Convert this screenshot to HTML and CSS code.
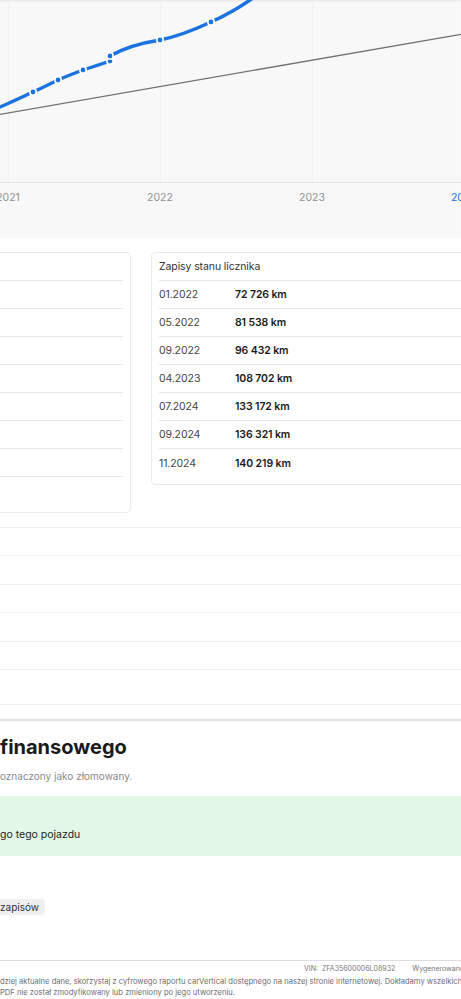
FILE: index.html
```html
<!DOCTYPE html>
<html lang="pl">
  <head>
    <meta charset="UTF-8" />
    <meta name="viewport" content="width=device-width, initial-scale=1.0" />
    <title>Raport pojazdu</title>
    <link rel="stylesheet" href="styles.css">
  </head>
  <body>
    <section class="chart">
      <div class="plot-area">
        <svg class="plot" width="461" height="182" viewBox="0 0 461 182">
          <g stroke="#f1f1f1" stroke-width="1">
            <line x1="8.5" y1="0" x2="8.5" y2="182" />
            <line x1="160.5" y1="0" x2="160.5" y2="182" />
            <line x1="312.5" y1="0" x2="312.5" y2="182" />
          </g>
          <line x1="0" y1="114.3" x2="461" y2="34.3" stroke="#727272" stroke-width="1.3" />
          <path d="M0,107 C12,102 22,97 33,92 C42,88 50,84 58,80 C67,76 75,73 83,70 C92,67 102,64 110,61 L110,56 C122,49 135,44 160,40 C180,36 196,29 211,22 C222,17 237,9 250,0 L262,-8"
            fill="none" stroke="#1b73e2" stroke-width="3.4" stroke-linecap="round" />
          <g class="dots">
            <circle cx="33" cy="92" r="3.2" />
            <circle cx="58" cy="80" r="3.2" />
            <circle cx="83" cy="70" r="3.2" />
            <circle cx="110" cy="61" r="3.2" />
            <circle cx="110" cy="56" r="3.2" />
            <circle cx="160" cy="40" r="3.2" />
            <circle cx="211" cy="22" r="3.2" />
          </g>
        </svg>
      </div>
      <div class="axis">
        <span>2021</span>
        <span>2022</span>
        <span>2023</span>
        <span class="current">2024</span>
      </div>
    </section>

    <section class="records">
      <div class="card">
        <div class="row"></div>
        <div class="row"></div>
        <div class="row"></div>
        <div class="row"></div>
        <div class="row"></div>
        <div class="row"></div>
        <div class="row"></div>
        <div class="row"></div>
        <div class="row"></div>
      </div>
      <div class="card">
        <div class="row title">Zapisy stanu licznika</div>
        <div class="row"><span class="date">01.2022</span><span class="km">72 726 km</span></div>
        <div class="row"><span class="date">05.2022</span><span class="km">81 538 km</span></div>
        <div class="row"><span class="date">09.2022</span><span class="km">96 432 km</span></div>
        <div class="row"><span class="date">04.2023</span><span class="km">108 702 km</span></div>
        <div class="row"><span class="date">07.2024</span><span class="km">133 172 km</span></div>
        <div class="row"><span class="date">09.2024</span><span class="km">136 321 km</span></div>
        <div class="row"><span class="date">11.2024</span><span class="km">140 219 km</span></div>
      </div>
    </section>

    <section class="history">
      <div class="history-row"></div>
      <div class="history-row"></div>
      <div class="history-row"></div>
      <div class="history-row"></div>
      <div class="history-row"></div>
      <div class="history-row tall"></div>
    </section>

    <section class="finance">
      <h2>finansowego</h2>
      <p class="sub">oznaczony jako złomowany.</p>
      <div class="notice">
        <p>go tego pojazdu</p>
      </div>
      <span class="chip">zapisów</span>
    </section>

    <footer class="footer">
      <div class="meta">
        <span class="vin">VIN:&nbsp; ZFA35600006L08932</span>
        <span class="sep"></span>
        <span>Wygenerowano</span>
      </div>
      <p class="disclaimer">dziej aktualne dane, skorzystaj z cyfrowego raportu carVertical dostępnego na naszej stronie internetowej. Dokładamy wszelkich</p>
      <p class="disclaimer">PDF nie został zmodyfikowany lub zmieniony po jego utworzeniu.</p>
    </footer>
  </body>
</html>
```

FILE: styles.css
```css
* {
  box-sizing: border-box;
}

body {
  margin: 0;
  width: 461px;
  overflow: hidden;
  font-family: Inter, "Noto Sans", sans-serif;
  color: #1f1f1f;
  background-color: #fff;
}

.chart {
  height: 238px;
  background-color: #f8f8f8;
  box-shadow: inset 0 2px 2px -1px rgba(0, 0, 0, 0.08);
}

.plot-area {
  height: 183px;
  border-bottom: 1px solid #e4e4e4;
}

.plot {
  display: block;
}

.dots circle {
  fill: #1b73e2;
  stroke: #fff;
  stroke-width: 1.6;
}

.axis {
  display: flex;
  margin-left: -68px;
  padding-top: 8px;
}

.axis span {
  flex: 0 0 152px;
  text-align: center;
  font-size: 10.5px;
  line-height: 14px;
  color: #919191;
}

.axis .current {
  color: #1a73e8;
}

.records {
  display: grid;
  grid-template-columns: 151px 340px;
  column-gap: 20px;
  align-items: start;
  margin: 14px 0 0 -20px;
}

.card {
  border: 1px solid #ebebeb;
  border-radius: 4px;
  padding: 0 7px 7px;
  background-color: #fff;
}

.row {
  height: 28px;
  display: flex;
  align-items: center;
  border-bottom: 1px solid #e8e8e8;
  font-size: 10.5px;
  letter-spacing: -0.1px;
}

.row:last-child {
  border-bottom: none;
}

.title {
  color: #333;
}

.date {
  width: 76px;
  color: #444;
}

.km {
  font-weight: 600;
  color: #1a1a1a;
}

.history {
  margin-top: 14px;
  border-top: 1px solid #eeeeee;
}

.history-row {
  height: 28.4px;
  border-bottom: 1px solid #eeeeee;
}

.history-row.tall {
  height: 35px;
}

.finance {
  margin-top: 14px;
  border-top: 2px solid #e2e2e2;
}

.finance h2 {
  margin: 14px 0 0;
  font-size: 20px;
  line-height: 24px;
  font-weight: 700;
  color: #1a1a1a;
}

.sub {
  margin: 10px 0 0;
  font-size: 10px;
  line-height: 14px;
  color: #8a8a8a;
}

.notice {
  margin-top: 13px;
  padding: 31px 0 13px;
  background-color: #e3f8e6;
}

.notice p {
  margin: 0;
  font-size: 10.5px;
  line-height: 16px;
  color: #222;
}

.chip {
  display: inline-block;
  margin: 43px 0 0 -6px;
  padding: 0 6px;
  height: 16px;
  line-height: 16px;
  font-size: 10px;
  color: #333;
  background-color: #efefef;
  border-radius: 4px;
}

.footer {
  margin-top: 45px;
  border-top: 1px solid #dedede;
}

.meta {
  display: flex;
  align-items: center;
  height: 15px;
  padding-left: 304px;
  font-size: 7px;
  color: #777;
  white-space: nowrap;
}

.sep {
  width: 1px;
  height: 13px;
  margin: 0 4px 0 13px;
  background-color: #d6d6d6;
}

.disclaimer {
  margin: 0;
  font-size: 7.6px;
  line-height: 11px;
  color: #6e6e6e;
  white-space: nowrap;
}
```
